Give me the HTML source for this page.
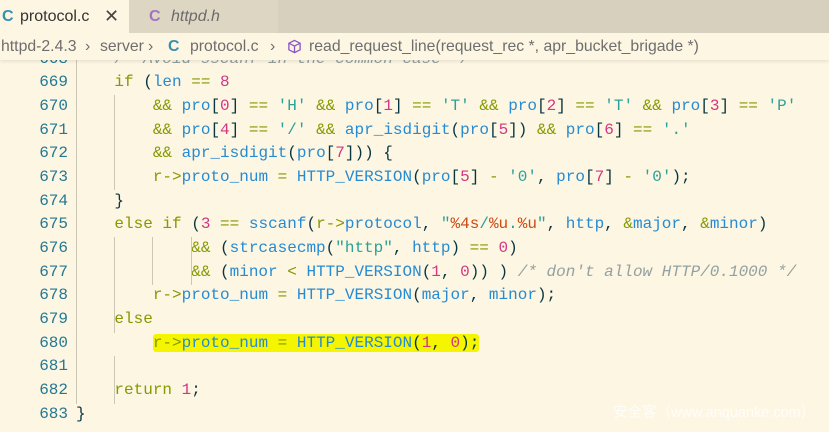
<!DOCTYPE html>
<html><head><meta charset="utf-8"><style>
body{margin:0;width:829px;height:429px;overflow:hidden;background:#fdf6e3;position:relative;font-family:"Liberation Sans",sans-serif}
.tabs{position:absolute;left:0;top:0;width:829px;height:33px;background:#d7d0bf}
.tab{position:absolute;top:0;height:33px;font-size:16px;line-height:33px}
.t1{left:0;width:129px;background:#fdf6e3;color:#333}
.t2{left:129px;width:149px;background:#ddd6c3;color:#6b6b6b;font-style:italic}
.c{font-weight:bold;font-style:normal;position:absolute}
.bc{position:absolute;left:0;top:33px;width:829px;height:27px;background:#fdf6e3;color:#6e6e6e;font-size:15.8px;line-height:27px;z-index:2;box-shadow:0 2px 3px rgba(0,0,0,.08);white-space:nowrap}
.code{position:absolute;left:0;top:47.5px;width:829px;height:384px;font-family:"Liberation Mono",monospace;font-size:16px}
.l{height:23.7px;line-height:23.7px;position:relative}
.n{position:absolute;left:0;width:68px;text-align:right;color:#237893}
.s{position:absolute;left:76px;color:#073642;white-space:pre}
.k{color:#859900}.i{color:#268bd2}.m{color:#d33682}.q{color:#2aa198}.e{color:#cb4b16}.cm{color:#93a1a1;font-style:italic}.o{color:#859900}.p{color:#073642}
.g{position:absolute;width:1px;background:#ccc7b5}
.hl{background:#f5f500;border-radius:3px}
.wm{position:absolute;left:613px;top:401px;color:rgba(255,255,255,.8);font-size:14.5px;font-family:"Liberation Sans","Noto Sans CJK SC",sans-serif;white-space:nowrap}
</style></head><body>
<div class="tabs">
<div class="tab t1"><span class="c" style="left:2px;color:#3a8fb0">C</span><span style="position:absolute;left:20px">protocol.c</span><span style="position:absolute;left:104px;color:#444;font-size:18px">✕</span></div>
<div class="tab t2"><span class="c" style="left:20px;color:#a074c4">C</span><span style="position:absolute;left:42px">httpd.h</span></div>
</div>
<div class="code">
<div class="l"><span class="n">668</span><span class="s cm">    /* Avoid sscanf in the common case */</span></div>
<div class="l"><span class="n">669</span><span class="s">    <span class="k">if</span> (<span class="i">len</span> <span class="o">==</span> <span class="m">8</span></span></div>
<div class="l"><span class="n">670</span><span class="s">        <span class="o">&amp;&amp;</span> <span class="i">pro</span>[<span class="m">0</span>] <span class="o">==</span> <span class="q">'H'</span> <span class="o">&amp;&amp;</span> <span class="i">pro</span>[<span class="m">1</span>] <span class="o">==</span> <span class="q">'T'</span> <span class="o">&amp;&amp;</span> <span class="i">pro</span>[<span class="m">2</span>] <span class="o">==</span> <span class="q">'T'</span> <span class="o">&amp;&amp;</span> <span class="i">pro</span>[<span class="m">3</span>] <span class="o">==</span> <span class="q">'P'</span></span></div>
<div class="l"><span class="n">671</span><span class="s">        <span class="o">&amp;&amp;</span> <span class="i">pro</span>[<span class="m">4</span>] <span class="o">==</span> <span class="q">'/'</span> <span class="o">&amp;&amp;</span> <span class="i">apr_isdigit</span>(<span class="i">pro</span>[<span class="m">5</span>]) <span class="o">&amp;&amp;</span> <span class="i">pro</span>[<span class="m">6</span>] <span class="o">==</span> <span class="q">'.'</span></span></div>
<div class="l"><span class="n">672</span><span class="s">        <span class="o">&amp;&amp;</span> <span class="i">apr_isdigit</span>(<span class="i">pro</span>[<span class="m">7</span>])) {</span></div>
<div class="l"><span class="n">673</span><span class="s">        <span class="o">r-&gt;</span><span class="i">proto_num</span> <span class="o">=</span> <span class="i">HTTP_VERSION</span>(<span class="i">pro</span>[<span class="m">5</span>] <span class="o">-</span> <span class="q">'0'</span>, <span class="i">pro</span>[<span class="m">7</span>] <span class="o">-</span> <span class="q">'0'</span>);</span></div>
<div class="l"><span class="n">674</span><span class="s">    }</span></div>
<div class="l"><span class="n">675</span><span class="s">    <span class="k">else if</span> (<span class="m">3</span> <span class="o">==</span> <span class="i">sscanf</span>(<span class="o">r-&gt;</span><span class="i">protocol</span>, <span class="q">"</span><span class="e">%4s</span><span class="q">/</span><span class="e">%u</span><span class="q">.</span><span class="e">%u</span><span class="q">"</span>, <span class="i">http</span>, <span class="o">&amp;</span><span class="i">major</span>, <span class="o">&amp;</span><span class="i">minor</span>)</span></div>
<div class="l"><span class="n">676</span><span class="s">            <span class="o">&amp;&amp;</span> (<span class="i">strcasecmp</span>(<span class="q">"http"</span>, <span class="i">http</span>) <span class="o">==</span> <span class="m">0</span>)</span></div>
<div class="l"><span class="n">677</span><span class="s">            <span class="o">&amp;&amp;</span> (<span class="i">minor</span> <span class="o">&lt;</span> <span class="i">HTTP_VERSION</span>(<span class="m">1</span>, <span class="m">0</span>)) ) <span class="cm">/* don't allow HTTP/0.1000 */</span></span></div>
<div class="l"><span class="n">678</span><span class="s">        <span class="o">r-&gt;</span><span class="i">proto_num</span> <span class="o">=</span> <span class="i">HTTP_VERSION</span>(<span class="i">major</span>, <span class="i">minor</span>);</span></div>
<div class="l"><span class="n">679</span><span class="s">    <span class="k">else</span></span></div>
<div class="l"><span class="n">680</span><span class="s">        <span class="hl"><span class="o">r-&gt;</span><span class="i">proto_num</span> <span class="o">=</span> <span class="i">HTTP_VERSION</span>(<span class="m">1</span>, <span class="m">0</span>);</span></span></div>
<div class="l"><span class="n">681</span><span class="s"></span></div>
<div class="l"><span class="n">682</span><span class="s">    <span class="k">return</span> <span class="m">1</span>;</span></div>
<div class="l"><span class="n">683</span><span class="s">}</span></div>
<div class="g" style="left:76px;top:0;height:356px"></div>
<div class="g" style="left:114px;top:47px;height:95px"></div>
<div class="g" style="left:114px;top:189px;height:96px"></div>
<div class="g" style="left:114px;top:308px;height:48px"></div>
<div class="g" style="left:152px;top:189px;height:48px"></div>
<div class="g" style="left:191px;top:189px;height:48px"></div>
</div>
<div class="bc"><span style="position:absolute;left:1px">httpd-2.4.3</span><span style="position:absolute;left:85px">›</span><span style="position:absolute;left:100px">server</span><span style="position:absolute;left:148px">›</span><span style="position:absolute;left:168px;color:#3a8fb0;font-weight:bold">C</span><span style="position:absolute;left:190px">protocol.c</span><span style="position:absolute;left:270px">›</span>
<svg style="position:absolute;left:287px;top:6px" width="15" height="15" viewBox="0 0 16 16" fill="none" stroke="#8a55c4" stroke-width="1.4"><path d="M8 1.5L14 4.5V11.5L8 14.5L2 11.5V4.5Z M2 4.5L8 7.5L14 4.5 M8 7.5V14.5"/></svg>
<span style="position:absolute;left:309px">read_request_line(request_rec *, apr_bucket_brigade *)</span></div>
<div class="wm">安全客（www.anquanke.com）</div>
</body></html>
